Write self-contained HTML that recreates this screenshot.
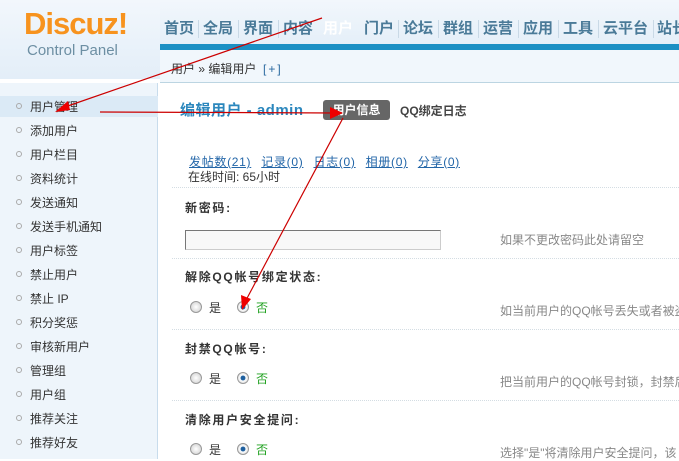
<!DOCTYPE html>
<html><head><meta charset="utf-8"><style>
*{margin:0;padding:0;box-sizing:border-box}
body{width:679px;height:459px;overflow:hidden;position:relative;background:#fff;font-family:"Liberation Sans","Noto Sans CJK SC",sans-serif;font-size:12px;color:#333}
.a{position:absolute;white-space:nowrap}
#hd{position:absolute;left:0;top:0;width:679px;height:50px;background:linear-gradient(#f2f7fc,#e3eef8)}
#hdl{position:absolute;left:0;top:0;width:160px;height:79px;background:linear-gradient(#f2f7fc,#e3eef8)}
#bar{position:absolute;left:160px;top:44px;width:519px;height:6px;background:#1b90c4}
.nav{top:17px;font-size:15px;color:#4a7a98;font-weight:bold}
.sep{top:20px;width:1px;height:18px;background:#c9d9e6}
#act{left:320px;top:7px;width:39px;height:43px;background:linear-gradient(#3d8fc8,#1a80bc);border-radius:6px 6px 0 0}
#side{position:absolute;left:0;top:83px;width:158px;height:376px;background:#eef5fb;border-right:1px solid #c8dcec}
#bc{position:absolute;left:160px;top:50px;width:519px;height:33px;background:#f1f7fc;border-bottom:1px solid #bcd5e2}
.mi{left:30px;font-size:12px;color:#333}
.dot{left:16px;width:6px;height:6px;border:1px solid #aaa;border-radius:50%}
.hr{left:172px;width:507px;border-top:1px dotted #d4dde3}
.lb{left:185px;font-weight:bold;color:#333;font-size:12px;letter-spacing:1.7px}
.help{left:500px;color:#888}
.r{width:12px;height:12px;border-radius:50%;border:1px solid #999;background:radial-gradient(#fff,#ccc)}
.r.on{background:radial-gradient(#1e5f9e 30%,#fff 40%,#ccc)}
.lk{color:#2366a8;text-decoration:underline;letter-spacing:0.7px}
</style></head><body>
<div id="hd"></div>
<div id="hdl"></div>
<div class="a" style="left:24px;top:6px;font-size:31px;font-weight:bold;color:#f7931e;letter-spacing:-1px">Discuz!</div>
<div class="a" style="left:27px;top:42px;font-size:15px;color:#6d8fa3">Control Panel</div>
<div id="bar"></div>
<div id="act"></div>
<div class="a nav" style="left:164px">首页</div><div class="a sep" style="left:198px"></div>
<div class="a nav" style="left:203px">全局</div><div class="a sep" style="left:238px"></div>
<div class="a nav" style="left:243px">界面</div><div class="a sep" style="left:278px"></div>
<div class="a nav" style="left:283px">内容</div>
<div class="a nav" style="left:323px;color:#fff">用户</div>
<div class="a nav" style="left:364px">门户</div><div class="a sep" style="left:398px"></div>
<div class="a nav" style="left:403px">论坛</div><div class="a sep" style="left:438px"></div>
<div class="a nav" style="left:443px">群组</div><div class="a sep" style="left:478px"></div>
<div class="a nav" style="left:483px">运营</div><div class="a sep" style="left:518px"></div>
<div class="a nav" style="left:523px">应用</div><div class="a sep" style="left:558px"></div>
<div class="a nav" style="left:563px">工具</div><div class="a sep" style="left:598px"></div>
<div class="a nav" style="left:603px">云平台</div><div class="a sep" style="left:653px"></div>
<div class="a nav" style="left:657px">站长</div>
<div id="bc"></div>
<div class="a" style="left:171px;top:60px;color:#333">用户 » 编辑用户 &nbsp;<span style="color:#2b6aa0;letter-spacing:2px">[+]</span></div>
<div id="side"></div>
<div class="a" style="left:0;top:96px;width:158px;height:21px;background:#dbeaf6"></div>
<div class="a dot" style="top:103px"></div><div class="a mi" style="top:98px">用户管理</div>
<div class="a dot" style="top:127px"></div><div class="a mi" style="top:122px">添加用户</div>
<div class="a dot" style="top:151px"></div><div class="a mi" style="top:146px">用户栏目</div>
<div class="a dot" style="top:175px"></div><div class="a mi" style="top:170px">资料统计</div>
<div class="a dot" style="top:199px"></div><div class="a mi" style="top:194px">发送通知</div>
<div class="a dot" style="top:223px"></div><div class="a mi" style="top:218px">发送手机通知</div>
<div class="a dot" style="top:247px"></div><div class="a mi" style="top:242px">用户标签</div>
<div class="a dot" style="top:271px"></div><div class="a mi" style="top:266px">禁止用户</div>
<div class="a dot" style="top:295px"></div><div class="a mi" style="top:290px">禁止 IP</div>
<div class="a dot" style="top:319px"></div><div class="a mi" style="top:314px">积分奖惩</div>
<div class="a dot" style="top:343px"></div><div class="a mi" style="top:338px">审核新用户</div>
<div class="a dot" style="top:367px"></div><div class="a mi" style="top:362px">管理组</div>
<div class="a dot" style="top:391px"></div><div class="a mi" style="top:386px">用户组</div>
<div class="a dot" style="top:415px"></div><div class="a mi" style="top:410px">推荐关注</div>
<div class="a dot" style="top:439px"></div><div class="a mi" style="top:434px">推荐好友</div>

<div class="a" style="left:180px;top:99px;font-size:15px;font-weight:bold;color:#2b87bd;letter-spacing:0.5px">编辑用户 - admin</div>
<div class="a" style="left:323px;top:100px;width:67px;height:20px;background:#666;border-radius:3px;color:#fff;font-weight:bold;text-align:center;line-height:20px">用户信息</div>
<div class="a" style="left:400px;top:102px;font-weight:bold;color:#444">QQ绑定日志</div>
<div class="a" style="left:189px;top:153px"><span class="lk">发帖数(21)</span>&nbsp;&nbsp; <span class="lk">记录(0)</span>&nbsp;&nbsp; <span class="lk">日志(0)</span>&nbsp;&nbsp; <span class="lk">相册(0)</span>&nbsp;&nbsp; <span class="lk">分享(0)</span></div>
<div class="a" style="left:188px;top:168px">在线时间: 65小时</div>
<div class="a hr" style="top:187px"></div>
<div class="a lb" style="top:199px">新密码:</div>
<div class="a" style="left:185px;top:230px;width:256px;height:20px;border:1px solid #999;border-color:#777 #ccc #ccc #777;background:#f8f8f8"></div>
<div class="a help" style="top:231px">如果不更改密码此处请留空</div>
<div class="a hr" style="top:258px"></div>
<div class="a lb" style="top:268px">解除QQ帐号绑定状态:</div>
<div class="a r" style="left:190px;top:301px"></div><div class="a" style="left:209px;top:299px">是</div>
<div class="a r on" style="left:237px;top:301px"></div><div class="a" style="left:256px;top:299px;color:#1ea01e">否</div>
<div class="a help" style="top:302px">如当前用户的QQ帐号丢失或者被盗</div>
<div class="a hr" style="top:329px"></div>
<div class="a lb" style="top:340px">封禁QQ帐号:</div>
<div class="a r" style="left:190px;top:372px"></div><div class="a" style="left:209px;top:370px">是</div>
<div class="a r on" style="left:237px;top:372px"></div><div class="a" style="left:256px;top:370px;color:#1ea01e">否</div>
<div class="a help" style="top:373px">把当前用户的QQ帐号封锁，封禁后</div>
<div class="a hr" style="top:400px"></div>
<div class="a lb" style="top:411px">清除用户安全提问:</div>
<div class="a r" style="left:190px;top:443px"></div><div class="a" style="left:209px;top:441px">是</div>
<div class="a r on" style="left:237px;top:443px"></div><div class="a" style="left:256px;top:441px;color:#1ea01e">否</div>
<div class="a help" style="top:444px">选择"是"将清除用户安全提问，该</div>

<svg class="a" style="left:0;top:0" width="679" height="459">
<g stroke="#c00" stroke-width="1.2" fill="none">
<line x1="322" y1="18" x2="62" y2="108"/>
<line x1="100" y1="112" x2="336" y2="113"/>
<line x1="343" y1="118" x2="245" y2="302"/>
</g>
<g fill="#e00">
<polygon points="55,112 68,101 70,110"/>
<polygon points="343,113 330,107 330,119"/>
<polygon points="242,310 241,295 251,299"/>
</g>
</svg>
</body></html>
